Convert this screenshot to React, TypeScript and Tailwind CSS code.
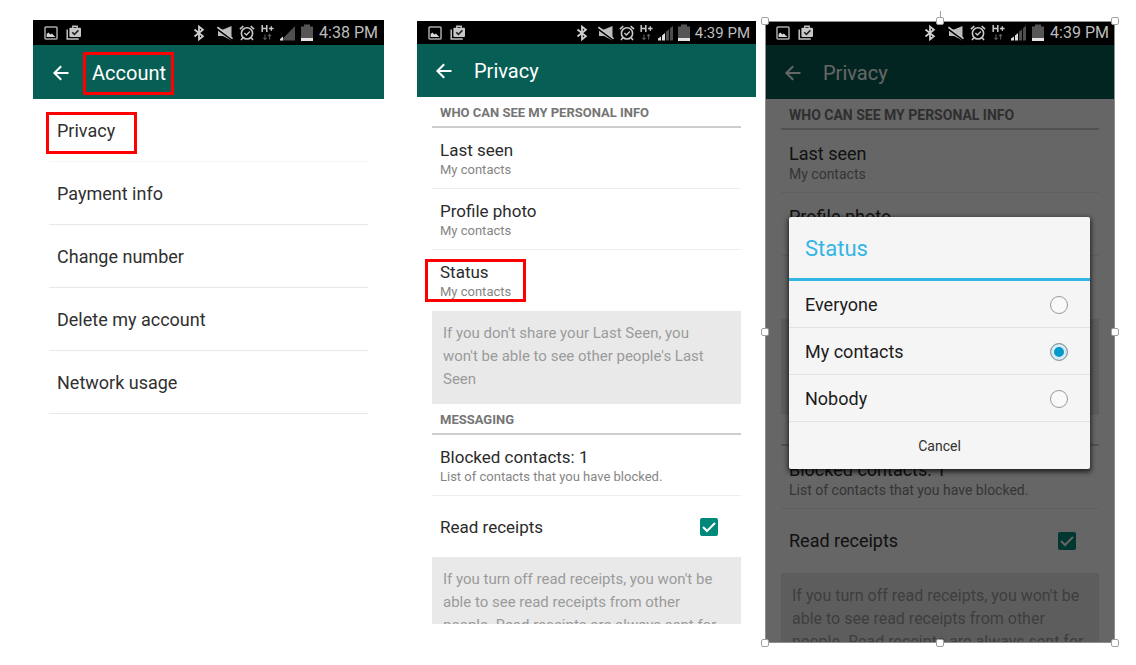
import { clsx } from "clsx";
import type { ReactNode } from "react";

const PictureIcon = () => (
  <svg viewBox="0 0 14 14" className="h-3.5 w-3.5" fill="none">
    <rect x="1" y="1" width="12" height="12" rx="0.8" stroke="#a9a9a9" strokeWidth="1.5" />
    <path d="M2.6 11V8l1.8-1.4 2 2 1.4-1L11.4 11z" fill="#d6d6d6" />
  </svg>
);

const BriefcaseIcon = () => (
  <svg viewBox="0 0 16 16" className="h-4 w-4" fill="none">
    <path d="M1.2 4.5v9.6h11.6" stroke="#c4c4c4" strokeWidth="1.5" />
    <path d="M6.8 3V1.2h4.4V3" stroke="#c4c4c4" strokeWidth="1.4" />
    <rect x="3.4" y="2.8" width="11.6" height="9.2" rx="1" fill="#c8c8c8" />
    <path d="M6.2 7.2l2.2 2.2 4-4" stroke="#222" strokeWidth="1.5" />
  </svg>
);

const BluetoothIcon = () => (
  <svg viewBox="0 0 12 16" className="h-4 w-3" fill="none" stroke="#cfcfcf" strokeWidth="1.8">
    <path d="M1.5 4.5l8.4 6.8L6 14.4V1.6l3.9 3.1-8.4 6.8" />
  </svg>
);

const MuteIcon = () => (
  <svg viewBox="0 0 16 16" className="h-4 w-4">
    <path d="M1 4.6h5L14.5 1v14.4L6 11H1z" fill="#bdbdbd" />
    <path d="M0 3.4L16 15" stroke="#000" strokeWidth="2.6" />
    <path d="M0.4 2.2L15.6 13.6" stroke="#c9c9c9" strokeWidth="1.6" />
  </svg>
);

const AlarmIcon = () => (
  <svg viewBox="0 0 16 16" className="h-4 w-4" fill="none" stroke="#c9c9c9" strokeWidth="1.6">
    <circle cx="8" cy="8.4" r="5.6" />
    <path d="M0.9 4.2l3.4-3M15.1 4.2l-3.4-3M3.8 12.8l-1.8 2.2M12.2 12.8l1.8 2.2" />
    <path d="M5.4 8l2 2 3.4-3.6" strokeWidth="1.4" />
  </svg>
);

const NetworkIcon = () => (
  <svg viewBox="0 0 13 18" className="h-[18px] w-[13px]" fill="none">
    <path d="M1.2 1v7M5.8 1v7M1.2 4.5h4.6" stroke="#c9c9c9" strokeWidth="1.5" />
    <path d="M8 4.5h4.6M10.3 2.2v4.6" stroke="#c9c9c9" strokeWidth="1.4" />
    <path d="M4 10.5v5M2.5 13.8L4 15.5l1.5-1.7M8.6 15.5v-5M7.1 12.2l1.5-1.7 1.5 1.7" stroke="#5c5c5c" strokeWidth="1.1" />
  </svg>
);

const SignalIcon = ({ bars }: { bars: boolean }) => (
  <svg viewBox="0 0 15 16" className="h-4 w-[15px]">
    {bars ? (
      <>
        <path d="M0 15.5v-2l3-2v4zM4 15.5v-5l3-2.6v7.6z" fill="#dcdcdc" />
        <path d="M8 15.5V6.8l3-2.6v11.3zM12 15.5V3.3l3-2.6v14.8z" fill="#4f4f4f" />
      </>
    ) : (
      <>
        <path d="M1 15.5L15 1v14.5z" fill="#4f4f4f" />
        <path d="M0 15.5v-1.6l3-2.4v4z" fill="#dcdcdc" />
      </>
    )}
  </svg>
);

const BatteryIcon = () => (
  <svg viewBox="0 0 12 18" className="h-[18px] w-3">
    <path d="M3 0.5h6v2h3V14H0V2.5h3z" fill="#555" />
    <rect y="14" width="12" height="3" fill="#e4e4e4" />
  </svg>
);

type StatusBarProps = { time: string; bars?: boolean; compact?: boolean; className: string };

const StatusBar = ({ time, bars = true, compact, className }: StatusBarProps) => (
  <div className={clsx("flex items-center justify-between bg-black pl-[11px] pr-1.5", className)}>
    <div className="flex items-center gap-2">
      <PictureIcon />
      <BriefcaseIcon />
    </div>
    <div className={clsx("flex items-center", compact ? "gap-[5px] text-[15px]" : "gap-1.5 text-base")}>
      <BluetoothIcon />
      <span />
      <MuteIcon />
      <AlarmIcon />
      <NetworkIcon />
      <SignalIcon bars={bars} />
      <BatteryIcon />
      <span className="leading-5 text-[#bdbdbd]">{time}</span>
    </div>
  </div>
);

const AppBar = ({ children, className }: { children: ReactNode; className: string }) => (
  <header className={clsx("flex items-center bg-[#075e54] text-white", className)}>
    <button type="button" aria-label="Back">
      <svg viewBox="0 0 16 16" className="h-4 w-4" fill="none" stroke="currentColor" strokeWidth="2">
        <path d="M15.5 8H2M8.2 1.2L1.4 8l6.8 6.8" />
      </svg>
    </button>
    <h1 className="relative text-xl leading-6">{children}</h1>
  </header>
);

const Highlight = ({ className }: { className: string }) => (
  <span className={clsx("pointer-events-none absolute border-3 border-[#ff0000]", className)} />
);

const accountItems = ["Privacy", "Payment info", "Change number", "Delete my account", "Network usage"];

const AccountScreen = () => (
  <section className="mt-5 mr-[33px] min-w-0 flex-[351]">
    <StatusBar time="4:38 PM" bars={false} className="h-[25px]" />
    <AppBar className="h-[54px] gap-[23px] pt-0.5 pl-5">
      Account
      <Highlight className="-top-[9px] -left-[9px] h-[43px] w-[91px]" />
    </AppBar>
    <ul className="px-4">
      {accountItems.map((item) => (
        <li key={item} className="border-b border-[#e8e8e8] first:border-[#f6f6f6]">
          <button type="button" className="flex h-[62px] w-full items-center pt-0.5 pl-2 text-left text-lg leading-[22px] text-[#303030]">
            <span className="relative">
              {item}
              {item === "Privacy" && <Highlight className="-top-2 -left-[11px] h-[42px] w-[91px]" />}
            </span>
          </button>
        </li>
      ))}
    </ul>
  </section>
);

type Size = { large?: boolean };

const SectionTitle = ({ children, large }: Size & { children: ReactNode }) => (
  <h2
    className={clsx(
      "h-[31px] border-b-2 border-[#cdcdcd] pl-2 leading-8 font-bold text-[#757575]",
      large ? "text-sm" : "text-[13px]",
    )}
  >
    {children}
  </h2>
);

const SettingRow = ({ title, detail, large, last, marked }: Size & { title: string; detail: string; last?: boolean; marked?: boolean }) => (
  <button
    type="button"
    className={clsx(
      "relative flex w-full flex-col justify-center border-b pl-2 text-left",
      large ? "h-[63px] pt-1" : "h-[61px] pt-0.5",
      last ? "border-transparent" : "border-[#eeeeee]",
    )}
  >
    <span className={clsx("leading-[22px] text-[#2b2b2b]", large ? "text-lg" : "text-[17px]")}>{title}</span>
    <span className={clsx("leading-[18px] text-[#858585]", large ? "text-sm" : "text-[13px]")}>{detail}</span>
    {marked && <Highlight className="top-[9px] -left-[7px] h-[43px] w-[101px]" />}
  </button>
);

const Note = ({ children, large, className }: Size & { children: ReactNode; className: string }) => (
  <p
    className={clsx(
      "overflow-hidden bg-[#e9e9e9] pt-[11px] pl-[11px] leading-[23px] text-[#9b9b9b]",
      large ? "pr-[11px] text-base" : "pr-5 text-[15px]",
      className,
    )}
  >
    {children}
  </p>
);

const PrivacySettings = ({ large }: Size) => (
  <>
    <AppBar className={large ? "h-[54px] gap-[22px] pt-0.5 pl-5" : "h-[53px] gap-[22px] pl-[19px]"}>Privacy</AppBar>
    <div className={large ? "px-4" : "px-[15px]"}>
      <SectionTitle large={large}>WHO CAN SEE MY PERSONAL INFO</SectionTitle>
      <SettingRow large={large} title="Last seen" detail="My contacts" />
      <SettingRow large={large} title="Profile photo" detail="My contacts" />
      <SettingRow large={large} title="Status" detail="My contacts" last marked={!large} />
      <Note large={large} className={large ? "h-24" : "h-[93px]"}>
        If you don't share your Last Seen, you won't be able to see other people's Last Seen
      </Note>
      <SectionTitle large={large}>MESSAGING</SectionTitle>
      <SettingRow large={large} title="Blocked contacts: 1" detail="List of contacts that you have blocked." />
      <label
        className={clsx(
          "flex items-center justify-between pr-[23px] pl-2 leading-[22px] text-[#2b2b2b]",
          large ? "h-16 text-lg" : "h-[61px] text-[17px]",
        )}
      >
        Read receipts
        <span className="relative h-[18px] w-[18px]">
          <input type="checkbox" defaultChecked className="block h-[18px] w-[18px] appearance-none rounded-xs bg-[#d0d0d0] checked:bg-[#00897b]" />
          <svg viewBox="0 0 18 18" className="pointer-events-none absolute inset-0" fill="none" stroke="#fff" strokeWidth="2">
            <path d="M3 9l4 4 8-8" />
          </svg>
        </span>
      </label>
      <Note large={large} className={large ? "h-[70px]" : "h-[67px]"}>
        If you turn off read receipts, you won't be able to see read receipts from other people. Read receipts are always sent for
      </Note>
    </div>
  </>
);

const StatusDialog = () => (
  <div
    role="dialog"
    aria-label="Status"
    className="absolute top-[196px] right-[25px] left-6 rounded-xs bg-[#f5f5f5] shadow-[0_2px_5px_1px_rgba(0,0,0,0.7)]"
  >
    <h2 className="h-16 border-b-3 border-[#33b5e5] pl-4 text-[22px] leading-[64px] text-[#33b5e5]">Status</h2>
    {["Everyone", "My contacts", "Nobody"].map((option) => (
      <label
        key={option}
        className="flex h-[47px] items-center justify-between border-b border-[#e2e2e2] pt-0.5 pr-[22px] pl-4 text-lg leading-[22px] text-[#1c1c1c]"
      >
        {option}
        <input
          type="radio"
          name="status"
          defaultChecked={option === "My contacts"}
          className="h-[18px] w-[18px] appearance-none rounded-full border border-[#9a9a9a] bg-[#f9f9f9] checked:bg-[#0099cc] checked:shadow-[inset_0_0_0_3px_#dcebf1]"
        />
      </label>
    ))}
    <button type="button" className="h-[47px] w-full text-sm text-[#303030]">
      Cancel
    </button>
  </div>
);

const handles = [
  "-top-[5px] -left-[5px]",
  "-top-[5px] left-1/2 -translate-x-1/2",
  "-top-[5px] -right-[5px]",
  "top-1/2 -left-[5px] -translate-y-1/2",
  "top-1/2 -right-[5px] -translate-y-1/2",
  "-bottom-[5px] -left-[5px]",
  "-bottom-[5px] left-1/2 -translate-x-1/2",
  "-bottom-[5px] -right-[5px]",
];

const SelectionFrame = () => (
  <div className="pointer-events-none absolute inset-0 border border-[#8f8f8f]">
    <span className="absolute -top-[11px] left-1/2 h-2 w-px bg-[#a0a0a0]" />
    {handles.map((place) => (
      <span key={place} className={clsx("absolute h-2 w-2 rounded-xs border border-[#a0a0a0] bg-white", place)} />
    ))}
  </div>
);

export default function App() {
  return (
    <main className="flex items-start bg-white pr-[21px] pb-[22px] pl-[33px] font-[Roboto,sans-serif]">
      <AccountScreen />
      <section className="mt-[21px] mr-[9px] min-w-0 flex-[339]">
        <StatusBar time="4:39 PM" compact className="h-[23px]" />
        <PrivacySettings />
      </section>
      <section className="relative mt-[21px] min-w-0 flex-[350]">
        <StatusBar time="4:39 PM" className="h-6" />
        <div className="relative">
          <PrivacySettings large />
          <div className="absolute inset-0 bg-black/60" />
        </div>
        <StatusDialog />
        <SelectionFrame />
      </section>
    </main>
  );
}
